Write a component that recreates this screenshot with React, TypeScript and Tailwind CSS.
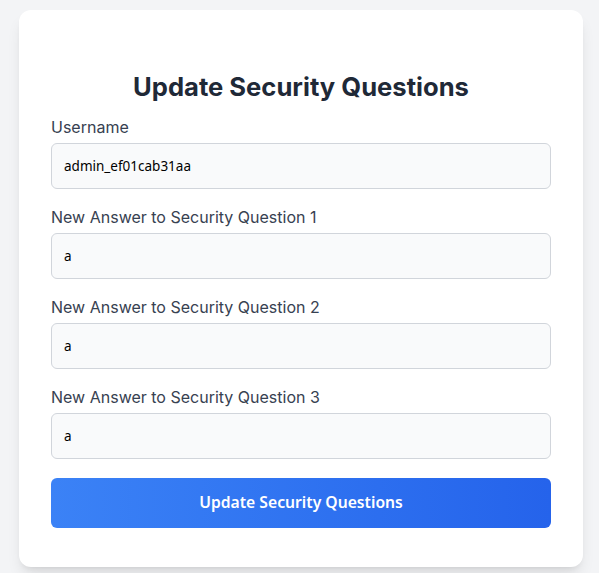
const fields = [
  { label: 'Username', value: 'admin_ef01cab31aa' },
  { label: 'New Answer to Security Question 1', value: 'a' },
  { label: 'New Answer to Security Question 2', value: 'a' },
  { label: 'New Answer to Security Question 3', value: 'a' },
];

export default function App() {
  return (
    <div className="min-h-[573px] bg-gray-100 pt-[10px] pl-[19px] font-['Inter',sans-serif]">
      <div className="w-[564px] h-[557px] rounded-xl bg-white shadow-lg px-8 pt-[61px]">
        <h1 className="text-[25.6px] leading-8 font-bold text-[#1f2937] text-center mb-3">Update Security Questions</h1>
        <form className="flex flex-col" onSubmit={(e) => e.preventDefault()}>
          <div className="flex flex-col gap-4">
            {fields.map((f) => (
              <div key={f.label}>
                <label className="block text-base text-[#374151] mb-1">{f.label}</label>
                <input
                  type="text"
                  defaultValue={f.value}
                  className="w-full h-[46px] px-3 rounded-md border border-[#d1d5db] bg-[#f9fafb] text-[13.5px] text-black font-['Noto_Sans',sans-serif] outline-none"
                />
              </div>
            ))}
          </div>
          <button
            type="submit"
            className="mt-[19px] w-full h-[50px] rounded-md bg-gradient-to-r from-[#3b82f6] to-[#2563eb] text-white font-semibold text-[15.7px] font-['Noto_Sans',sans-serif]"
          >
            Update Security Questions
          </button>
        </form>
      </div>
    </div>
  );
}
